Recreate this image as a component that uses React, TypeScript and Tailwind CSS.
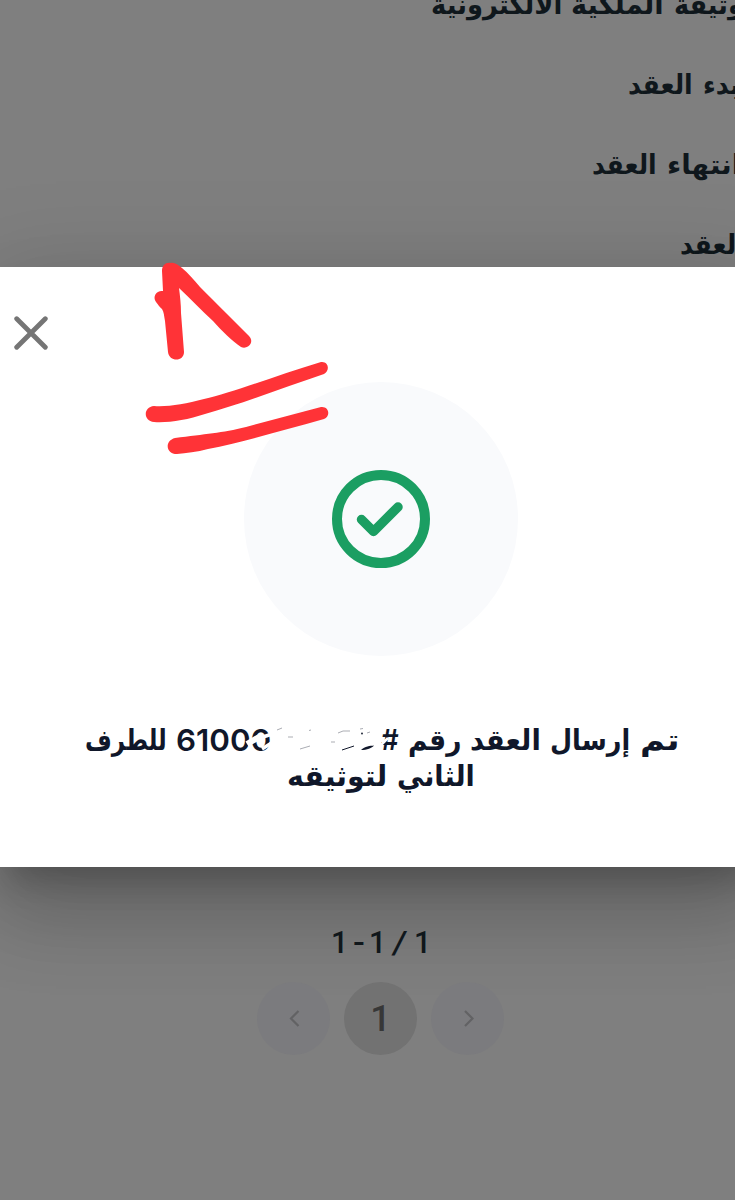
import { useLayoutEffect, useRef, useState } from "react"
import clsx from "clsx"

type WordProps = {
  text: string
  width: number
  className?: string
}

// Word stretched or squeezed to a fixed advance width
function Word({ text, width, className }: WordProps) {
  const ref = useRef<HTMLSpanElement>(null)
  const [scale, setScale] = useState(1)

  useLayoutEffect(() => {
    if (ref.current) {
      setScale(width / ref.current.offsetWidth)
    }
  }, [width, text])

  return (
    <span className={clsx("flex shrink-0 justify-start", className)} style={{ width }} dir="ltr">
      <span
        ref={ref}
        className="inline-block shrink-0 origin-left whitespace-nowrap"
        style={{ transform: `scaleX(${scale})` }}
      >
        {text}
      </span>
    </span>
  )
}

function ContractRows() {
  const row = "flex h-20 flex-row items-center text-[27px] font-bold leading-none text-[#0f171c]"

  return (
    <div className="-mt-[36px] flex flex-col" dir="ltr">
      <div className={clsx(row, "pl-[431px]")}>
        <Word text="الالكترونية" width={131} />
        <Word text="الملكية" width={93} className="ml-[9px]" />
        <Word text="وثيقة" width={70} className="ml-[10px]" />
      </div>
      <div className={clsx(row, "pl-[628px]")}>
        <Word text="العقد" width={65} />
        <Word text="بدء" width={37} className="ml-[10px]" />
      </div>
      <div className={clsx(row, "pl-[592px]")}>
        <Word text="العقد" width={65} />
        <Word text="انتهاء" width={74} className="ml-[10px]" />
      </div>
      <div className={clsx(row, "pl-[680px]")}>
        <Word text="العقد" width={65} />
      </div>
    </div>
  )
}

function SuccessIcon() {
  return (
    <div className="flex size-[274px] items-center justify-center rounded-full bg-[#f9fafc]">
      <svg className="size-[98px]" viewBox="0 0 98 98" fill="none">
        <circle cx="49" cy="49" r="44" stroke="#1b9e62" strokeWidth="10" />
        <path d="M29.500 49.500L41.500 61.500L66 37" stroke="#1b9e62" strokeWidth="9.5" strokeLinecap="round" strokeLinejoin="round" />
      </svg>
    </div>
  )
}

// Hand-drawn step number with a double underline
function Marker() {
  return (
    <svg className="absolute left-[140px] -top-[12px] h-[204px] w-[200px]" viewBox="140 255 200 204" fill="#ff3337">
      <path d="M162 271C162 265 166 262 171 263C174 262 178 265 182 268C188 273 194 280 200 287C208 295 217 304 227 314L249 336C255 342 248 350 241 347C232 341 222 331 213 321C202 311 191 299 179 288C180 296 181 304 181 313L184 352C184 362 169 362 168 352L165 321C164 316 164 312 162 309C159 307 158 304 156 302C152 296 157 290 163 291Z" />
      <path d="M154 406C168 407 185 404 204 399C231 393 275 376 321 362C329 361 330 371 324 374C285 387 244 403 205 414C187 420 168 423 154 422C143 421 143 407 154 406Z" />
      <path d="M175 438C205 434 222 433 246 427L321 407C329 406 331 416 324 419C284 430 243 442 208 449C197 452 186 453 177 454C166 454 164 441 175 438Z" />
    </svg>
  )
}

// Strokes left over where the contract number is rubbed out
function Smudge() {
  return (
    <svg className="absolute left-[245px] top-[455px] h-[40px] w-[150px]" viewBox="245 722 150 40" fill="none">
      <g stroke="#fff">
        <path d="M247 744L259 737" strokeWidth="6" />
        <path d="M262 749L273 742M263 737L272 734" strokeWidth="3.5" />
        <path d="M380 746L388 738" strokeWidth="2.5" />
      </g>
      <g stroke="#10172a" strokeWidth="0.6" opacity="0.6">
        <path d="M277 730L282 728M288 737H293M300 749L310 746M309 730.500L311 730M331 742H335M338 733L343 731L350 731M360 729L363 728.500M367 733L370 732" />
      </g>
      <path d="M342 750L354 746" stroke="#10172a" strokeWidth="1" />
      <path d="M361 750C365 746 370 746 374 745.500C372 748 367 750 361 750Z" fill="#10172a" />
      <circle cx="362" cy="733.5" r="0.9" fill="#10172a" />
    </svg>
  )
}

function Dialog() {
  return (
    <div className="relative flex h-[600px] w-[762px] shrink-0 flex-col items-center bg-white shadow-[0_22px_30px_-10px_rgba(0,0,0,0.2),0_48px_76px_6px_rgba(0,0,0,0.14),0_18px_92px_16px_rgba(0,0,0,0.12)]">
      <button className="absolute left-[14px] top-[49px]" aria-label="close">
        <svg className="h-[34px] w-[34px]" viewBox="0 0 34 34" fill="none" stroke="#757575" strokeWidth="4.8" strokeLinecap="round">
          <path d="M2.700 2.700L31.300 31.300M31.300 2.700L2.700 31.300" />
        </svg>
      </button>
      <div className="mt-[115px]">
        <SuccessIcon />
      </div>
      <div className="mt-[66px] flex w-full flex-col text-[29px] font-bold leading-[36px] text-[#10172a]" dir="ltr">
        <div className="flex flex-row pl-[85px]">
          <Word text="للطرف" width={82} />
          <Word text="61000" width={95} className="ml-[9px] font-['Inter'] text-[30px] font-semibold" />
          <Word text="#" width={18} className="ml-[110px] font-['Inter'] font-semibold" />
          <Word text="رقم" width={53} className="ml-[9px]" />
          <Word text="العقد" width={71} className="ml-[9px]" />
          <Word text="إرسال" width={80} className="ml-[9px]" />
          <Word text="تم" width={40} className="ml-[10px]" />
        </div>
        <div className="flex flex-row pl-[287px]">
          <Word text="لتوثيقه" width={100} />
          <Word text="الثاني" width={78} className="ml-[10px]" />
        </div>
      </div>
      <Smudge />
      <Marker />
    </div>
  )
}

function Pagination() {
  const side = "flex size-[73px] items-center justify-center rounded-full bg-[#7b7b7e]"

  return (
    <div className="relative flex w-[761px] flex-col items-center font-['Roboto']" dir="ltr">
      <div className="mt-[57px] flex h-[36px] items-center text-[32px] font-medium leading-none text-[#10171b]">
        <Word text="1" width={17} />
        <Word text="-" width={12} className="ml-[5px]" />
        <Word text="1" width={17} className="ml-[4px]" />
        <Word text="/" width={17} className="ml-[5px] font-normal" />
        <Word text="1" width={17} className="ml-[6px]" />
      </div>
      <div className="mt-[22px] flex items-center gap-[14px]">
        <div className={side}>
          <svg className="h-[17px] w-[12px]" viewBox="0 0 12 17" fill="none" stroke="#626264" strokeWidth="2.2">
            <path d="M10.500 1L3 8.500L10.500 16" />
          </svg>
        </div>
        <div className="flex size-[73px] items-center justify-center rounded-full bg-[#727272] text-[36px] font-medium leading-none text-[#373737]">
          1
        </div>
        <div className={side}>
          <svg className="h-[17px] w-[12px]" viewBox="0 0 12 17" fill="none" stroke="#626264" strokeWidth="2.2">
            <path d="M3 1L10.500 8.500L3 16" />
          </svg>
        </div>
      </div>
    </div>
  )
}

export default function App() {
  return (
    <div className="flex h-[1200px] w-[735px] flex-col overflow-hidden bg-[#7f7f7f] font-['DejaVu_Sans',sans-serif]">
      <div className="h-[267px] shrink-0 overflow-hidden">
        <ContractRows />
      </div>
      <Dialog />
      <Pagination />
    </div>
  )
}
